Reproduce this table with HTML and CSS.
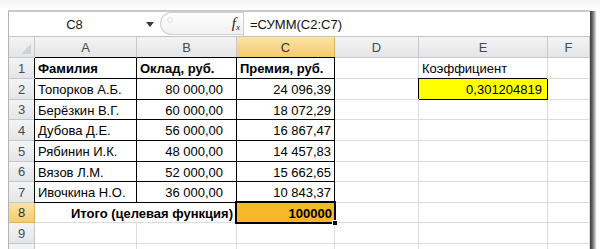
FILE: index.html
```html
<!DOCTYPE html>
<html lang="ru">
<head>
<meta charset="utf-8">
<title>Excel</title>
<link rel="stylesheet" href="styles.css">
</head>
<body>
<div class="shot">
  <div class="window">
    <div class="fbar">
      <div class="namebox">C8</div>
      <div class="dd"><svg width="8" height="5" viewBox="0 0 8 5"><path d="M0 0H8L4 5Z" fill="#3a3a3a"/></svg></div>
      <div class="pill"><span class="knob"></span><span class="fx"><i>f</i><sub>x</sub></span></div>
      <div class="formula">=СУММ(C2:C7)</div>
    </div>
    <div class="sheet">
      <div class="h corner"></div>
      <div class="h ch top">A</div>
      <div class="h ch top">B</div>
      <div class="h ch top sel">C</div>
      <div class="h ch">D</div>
      <div class="h ch">E</div>
      <div class="h ch">F</div>

      <div class="h rh">1</div>
      <div class="c bx bl bt b">Фамилия</div>
      <div class="c bx bt b">Оклад, руб.</div>
      <div class="c bx bt b">Премия, руб.</div>
      <div class="c"></div>
      <div class="c">Коэффициент</div>
      <div class="c"></div>

      <div class="h rh">2</div>
      <div class="c bx bl">Топорков А.Б.</div>
      <div class="c bx num sp">80 000,00</div>
      <div class="c bx num">24 096,39</div>
      <div class="c"></div>
      <div class="c yel num">0,301204819</div>
      <div class="c"></div>

      <div class="h rh">3</div>
      <div class="c bx bl">Берёзкин В.Г.</div>
      <div class="c bx num sp">60 000,00</div>
      <div class="c bx num">18 072,29</div>
      <div class="c"></div>
      <div class="c"></div>
      <div class="c"></div>

      <div class="h rh">4</div>
      <div class="c bx bl">Дубова Д.Е.</div>
      <div class="c bx num sp">56 000,00</div>
      <div class="c bx num">16 867,47</div>
      <div class="c"></div>
      <div class="c"></div>
      <div class="c"></div>

      <div class="h rh">5</div>
      <div class="c bx bl">Рябинин И.К.</div>
      <div class="c bx num sp">48 000,00</div>
      <div class="c bx num">14 457,83</div>
      <div class="c"></div>
      <div class="c"></div>
      <div class="c"></div>

      <div class="h rh">6</div>
      <div class="c bx bl">Вязов Л.М.</div>
      <div class="c bx num sp">52 000,00</div>
      <div class="c bx num">15 662,65</div>
      <div class="c"></div>
      <div class="c"></div>
      <div class="c"></div>

      <div class="h rh">7</div>
      <div class="c bx bl">Ивочкина Н.О.</div>
      <div class="c bx num sp">36 000,00</div>
      <div class="c bx num">10 843,37</div>
      <div class="c"></div>
      <div class="c"></div>
      <div class="c"></div>

      <div class="h rh sel">8</div>
      <div class="c span2 num b">Итого (целевая функция)</div>
      <div class="c active num b">100000<span class="handle"></span></div>
      <div class="c"></div>
      <div class="c"></div>
      <div class="c"></div>

      <div class="h rh">9</div>
      <div class="c"></div>
      <div class="c"></div>
      <div class="c"></div>
      <div class="c"></div>
      <div class="c"></div>
      <div class="c"></div>

      <div class="h rh"></div>
      <div class="c"></div>
      <div class="c"></div>
      <div class="c"></div>
      <div class="c"></div>
      <div class="c"></div>
      <div class="c"></div>
    </div>
  </div>
  <div class="shadow"></div>
</div>
</body>
</html>
```
FILE: styles.css
```css
* { box-sizing: border-box; }
html, body { margin: 0; padding: 0; background: #fff; }
body { font-family: "Liberation Sans", Arial, sans-serif; font-size: 13px; color: #000; }

.shot {
  width: 600px;
  height: 249px;
  overflow: hidden;
  display: flex;
  padding: 10px 0 0 8px;
  background: linear-gradient(#f4f4f4, #ffffff 10px);
}

.window {
  width: 582px;
  flex: none;
  border-top: 2px solid #c9c9c9;
  border-left: 1px solid #b4b4b4;
  background: #fff;
}

.shadow {
  width: 7px;
  flex: none;
  margin-top: 1px;
  background: linear-gradient(90deg, #3c3c3c 0, #5c5c5c 2px, #9a9a9a 4px, #e6e6e6 6px, #fff 7px);
}

.fbar {
  height: 25px;
  display: flex;
  align-items: stretch;
  border-bottom: 1px solid #c4c4c4;
  background: #fff;
}
.namebox {
  width: 131px;
  display: flex;
  align-items: center;
  justify-content: center;
  color: #1a1a1a;
}
.dd {
  width: 20px;
  display: flex;
  align-items: center;
  justify-content: center;
}
.pill {
  width: 83px;
  position: relative;
  border: 1px solid #d0d0d0;
  border-right: none;
  border-radius: 12px 0 0 12px;
  background: linear-gradient(#ffffff, #f1f1f1);
  display: flex;
  align-items: center;
  justify-content: flex-end;
  padding-right: 3px;
  margin: 0 0 1px;
}
.knob {
  position: absolute;
  left: 6px;
  top: 4px;
  width: 6px;
  height: 6px;
  border-radius: 50%;
  border: 1px solid #dedede;
  background: #fafafa;
}
.fx {
  font-family: "Liberation Serif", serif;
  font-size: 15px;
  color: #222;
  line-height: 1;
}
.fx sub { font-size: 9px; font-style: italic; vertical-align: -2px; }
.formula {
  flex: 1;
  border-left: 1px solid #d0d0d0;
  display: flex;
  align-items: center;
  padding-left: 6px;
  color: #111;
}

.sheet {
  display: grid;
  grid-template-columns: 26px 102px 100px 98px 84px 129px 42px;
  grid-template-rows: 21px 21px 21px 20px 21px 21px 20px 21px 20px 21px 20px;
}

.h {
  background: linear-gradient(#f3f4f5, #e3e5e8);
  border-right: 1px solid #c5c7ca;
  border-bottom: 1px solid #c5c7ca;
  color: #4a4a4a;
  display: flex;
  align-items: center;
  justify-content: center;
}
.corner { position: relative; }
.corner::after {
  content: "";
  position: absolute;
  right: 3px;
  bottom: 3px;
  border-style: solid;
  border-width: 0 0 10px 10px;
  border-color: transparent transparent #cfd1d4 transparent;
}
.h.sel {
  background: linear-gradient(#fbe3a6, #f5cb6e);
  border-right-color: #e1b45a;
  border-bottom-color: #e1b45a;
  color: #333;
}
.ch.top { border-bottom-color: #000; }

.c {
  border-right: 1px solid #dadcde;
  border-bottom: 1px solid #dadcde;
  display: flex;
  align-items: center;
  padding: 1px 3px 0 3px;
  white-space: nowrap;
  overflow: visible;
}
.bx { border-right-color: #000; border-bottom-color: #000; }
.bl { box-shadow: -1px 0 0 #000; }
.bt { box-shadow: 0 -1px 0 #000; }
.bl.bt { box-shadow: -1px -1px 0 #000; }
.b { font-weight: bold; }
.num { justify-content: flex-end; }
.sp { padding-right: 13px; }
.span2 { grid-column: span 2; padding-right: 3px; }

.yel {
  background: #ffff00;
  border-right: 1px solid #000;
  border-bottom: 1px solid #000;
  box-shadow: -1px -1px 0 #000;
  padding-right: 5px;
}

.active {
  position: relative;
  background: #f6b826;
  border-right-color: #000;
  border-bottom-color: #000;
  padding-right: 2px;
}
.active::after {
  content: "";
  position: absolute;
  left: -2px;
  top: -2px;
  right: -2px;
  bottom: -2px;
  border: 2px solid #000;
  pointer-events: none;
}
.handle {
  position: absolute;
  right: -4px;
  bottom: -4px;
  width: 6px;
  height: 6px;
  background: #000;
  border: 1px solid #fff;
  z-index: 2;
}
```
